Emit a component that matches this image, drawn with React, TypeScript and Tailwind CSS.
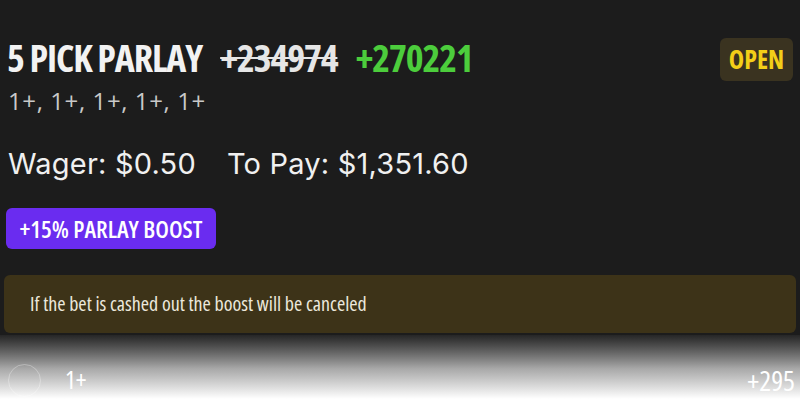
const cond = "font-['Open_Sans',sans-serif] font-stretch-[75%]";

export default function App() {
  return (
    <div className="w-[800px] h-[419px] overflow-hidden bg-[#1c1c1c] flex flex-col">
      {/* Header */}
      <div className="flex items-start justify-between pl-[7px] pr-[7px] pt-[38px]">
        <div className="flex flex-col">
          <div className={`flex items-baseline gap-[18px] ${cond} font-bold text-[38px] leading-[38px] tracking-[-1.1px]`}>
            <span className="text-[#f2f2f2]">5 PICK PARLAY</span>
            <span className="text-[#e6e6e6] line-through decoration-[2px]">+234974</span>
            <span className="text-[#4ccd3c]">+270221</span>
          </div>
          <div className="font-['Open_Sans',sans-serif] font-medium text-[24px] leading-none tracking-[0.6px] text-[#c9c9c9] mt-[13px] pl-[1px]">
            1+, 1+, 1+, 1+, 1+
          </div>
        </div>
        <div
          className={`bg-[#3a3320] rounded-md h-[43px] w-[73px] flex items-center justify-center ${cond} text-[26px] font-bold text-[#f3cf18]`}
        >
          OPEN
        </div>
      </div>

      {/* Wager */}
      <div className="pl-2 mt-[36px] flex gap-[31px] text-[29px] text-[#f0f0f0] leading-none font-['Inter',sans-serif] tracking-[0.2px]">
        <span>Wager: $0.50</span>
        <span>To Pay: $1,351.60</span>
      </div>

      {/* Boost */}
      <div className="pl-[6px] mt-[30px]">
        <div
          className={`inline-flex items-center justify-center h-[41px] w-[210px] rounded-md bg-[#6a2cf0] text-white text-[24px] font-semibold ${cond}`}
        >
          +15% PARLAY BOOST
        </div>
      </div>

      {/* Banner */}
      <div className={`mx-1 mt-[26px] h-[58px] rounded-md bg-[#3d3318] flex items-center pl-[26px] text-[20px] text-[#ece8dc] font-medium ${cond}`}>
        If the bet is cashed out the boost will be canceled
      </div>

      {/* Next leg, faded */}
      <div className="mt-[2px] flex-1 bg-linear-to-b from-[#262626] from-0% via-[#a8a8a8] via-40% to-white to-[76%]">
        <div className="flex items-center justify-between pl-2 pr-[5px] pt-[24px]">
          <div className="flex items-center gap-[24px]">
            <div className="w-[33px] h-[33px] rounded-full border border-white/30" />
            <span className={`text-[25px] text-white font-medium ${cond}`}>1+</span>
          </div>
          <span className={`text-[28px] text-white font-medium ${cond}`}>+295</span>
        </div>
      </div>
    </div>
  );
}
